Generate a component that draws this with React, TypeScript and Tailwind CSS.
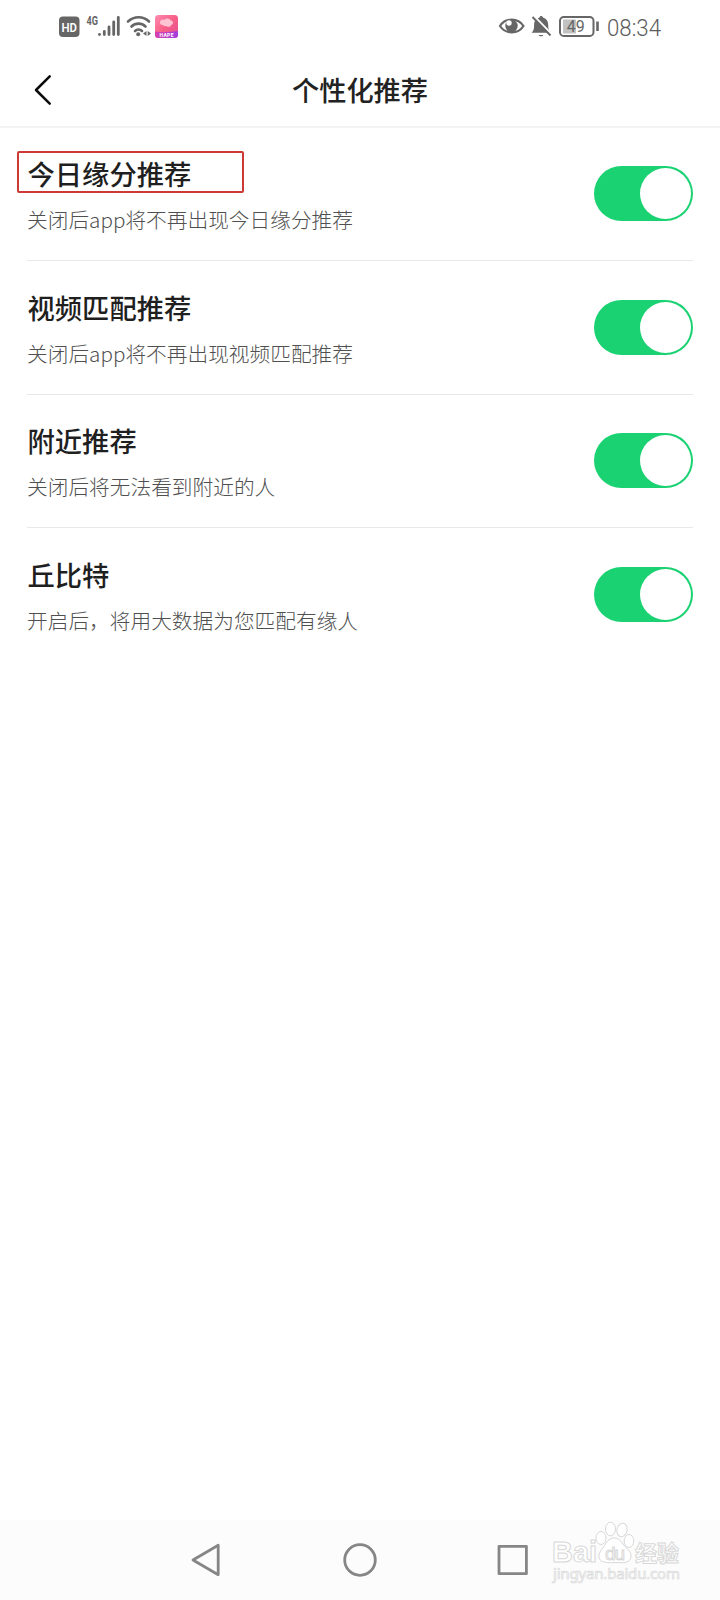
import { useState } from "react";

const rows = [
  { title: "今日缘分推荐", note: "关闭后app将不再出现今日缘分推荐", marked: true },
  { title: "视频匹配推荐", note: "关闭后app将不再出现视频匹配推荐" },
  { title: "附近推荐", note: "关闭后将无法看到附近的人" },
  { title: "丘比特", note: "开启后，将用大数据为您匹配有缘人" },
];

function StatusBar() {
  return (
    <div className="flex h-[52px] items-center justify-between pl-[58px] pr-[51px] text-[#666]">
      <svg width="122" height="32" viewBox="58 10 122 32" fill="none">
        <defs>
          <linearGradient id="pink" x1="0" y1="0" x2="1" y2="1">
            <stop offset="0" stopColor="#ff8bb0" />
            <stop offset="0.5" stopColor="#f85f86" />
            <stop offset="1" stopColor="#e24e98" />
          </linearGradient>
          <linearGradient id="band" x1="0" y1="0" x2="1" y2="0">
            <stop offset="0" stopColor="#d63fae" />
            <stop offset="1" stopColor="#a03fe0" />
          </linearGradient>
        </defs>
        <rect x="59" y="16.500" width="20.500" height="20.500" rx="4" fill="#666" />
        <text x="69.200" y="31.500" textAnchor="middle" fontSize="13.500" fontWeight="600" fill="#fff" fontFamily="Roboto" textLength="15.500" lengthAdjust="spacingAndGlyphs">HD</text>
        <text x="86.500" y="25.300" fontSize="12.500" fontWeight="700" fill="#666" fontFamily="Roboto" textLength="11.500" lengthAdjust="spacingAndGlyphs">4G</text>
        <g stroke="#666" strokeWidth="2.800" strokeLinecap="round">
          <path d="M99.500 34.300v0.300M104.300 31.500v3.100M109 27v7.600M113.700 22v12.600M118.300 17.300v17.300" />
        </g>
        <g stroke="#666" strokeWidth="2.600" strokeLinecap="round">
          <path d="M128 21.500c6-5.600 15.300-5.600 21 0M131.500 26.500c4-3.800 10-3.800 14 0M135 31c2-1.900 5-1.900 7 0" />
        </g>
        <circle cx="138.200" cy="34.300" r="2" fill="#666" />
        <path d="M143 33.500l3.500-2.500v5zM151 33.500l-3.300-2.500v5z" fill="#666" />
        <rect x="155" y="15" width="23" height="23" rx="3.500" fill="url(#pink)" />
        <path d="M155 31.500q11.500 1.500 23-0.500v3.500a3.500 3.500 0 0 1-3.500 3.500h-16a3.500 3.500 0 0 1-3.500-3.500z" fill="url(#band)" />
        <path d="M160 22.500c0-3 3-3.500 4.500-2.500c1.500-2.500 6-1.500 6 .5c3-.5 3.500 4 .5 4.500c0 2-3.500 2.500-4.500 1c-2 .5-3-.2-3.500-1c-2 .3-3-1-3-2.500z" fill="#ffc4d2" />
        <text x="166.500" y="36.800" textAnchor="middle" fontSize="5" fontWeight="700" fill="#fff" fontFamily="Roboto" textLength="14">HAPE</text>
      </svg>
      <svg width="172" height="32" viewBox="497 10 172 32" fill="none">
        <path d="M500 26c5.500-8.500 18-8.500 23.500 0c-5.500 8.500-18 8.500-23.500 0z" stroke="#666" strokeWidth="2.200" />
        <circle cx="511.500" cy="26" r="6.200" fill="#666" />
        <circle cx="509" cy="23" r="2.700" fill="#fff" />
        <path d="M531.500 32.800c2.300-2 2.600-4 2.600-8c0-4 2.500-6.500 5.400-7.300c.2-2 3.200-2 3.400 0c3.100.8 5.300 3.500 5.300 7.300c0 4 .5 6 2.600 8z" fill="#666" />
        <path d="M538.500 35h5c-.7 1.800-4.300 1.800-5 0z" fill="#666" />
        <path d="M534.500 16.500l17 17.500" stroke="#fff" strokeWidth="2" />
        <path d="M532.500 17l18 18.500" stroke="#666" strokeWidth="1.900" />
        <rect x="560" y="17" width="33.500" height="19" rx="3.800" stroke="#666" strokeWidth="2" />
        <rect x="563" y="19.500" width="13" height="14" fill="#c2c2c2" />
        <path d="M597.500 21.500v9.500" stroke="#666" strokeWidth="2.600" />
        <text x="575.800" y="32.200" textAnchor="middle" fontSize="16" fill="#666" fontFamily="Roboto" textLength="18">49</text>
        <text x="607" y="35.500" fontSize="24" fontWeight="300" fill="#5c5c5c" fontFamily="Roboto" textLength="54" lengthAdjust="spacingAndGlyphs">08:34</text>
      </svg>
    </div>
  );
}

function Toggle() {
  const [on, setOn] = useState(true);
  return (
    <button
      role="switch"
      aria-checked={on}
      onClick={() => setOn(!on)}
      className={`flex h-[55px] w-[99px] items-center rounded-full p-[2px] ${on ? "justify-end bg-[#1ad272]" : "justify-start bg-gray-300"}`}
    >
      <span className="size-[51px] rounded-full bg-white" />
    </button>
  );
}

function NavBar() {
  return (
    <nav className="flex h-20 items-center bg-[#fcfcfc] pl-[190px]">
      <svg width="340" height="36" viewBox="190 1542 340 36" fill="none" stroke="#868686" strokeWidth="2.800" strokeLinejoin="round">
        <path d="M193 1560l25.200-14.700v29.400z" />
        <circle cx="360" cy="1560" r="15.300" />
        <rect x="499" y="1546.300" width="27.400" height="27.400" />
      </svg>
      <svg className="ml-[20px]" width="140" height="80" viewBox="550 1520 140 80" fill="#fff" stroke="#d8d8d8" strokeWidth="1">
        <ellipse cx="601" cy="1538" rx="5" ry="6.500" />
        <ellipse cx="610.500" cy="1529" rx="5" ry="6.800" />
        <ellipse cx="622" cy="1530" rx="5" ry="6.800" transform="rotate(12 622 1530)" />
        <ellipse cx="629" cy="1541" rx="4.800" ry="6.500" />
        <path d="M606 1543c5-7 12-7 17 1c4 5 9 8 8 13c-1 6-7 6-15 5.500c-8 .5-15 .5-17-4.500c-1-6 4-9 7-15z" />
        <text x="552" y="1562" fontSize="29" fontWeight="700" fontFamily="Liberation Sans" textLength="45" lengthAdjust="spacingAndGlyphs">Bai</text>
        <text x="605" y="1560" fontSize="19" fontWeight="400" fontFamily="Liberation Sans" textLength="20">du</text>
        <text x="635" y="1561" fontSize="22" fontWeight="700" fontFamily="Noto Sans CJK SC">经验</text>
        <text x="553" y="1579" fontSize="15" strokeWidth="0.700" fontFamily="Noto Sans" textLength="127">jingyan.baidu.com</text>
      </svg>
    </nav>
  );
}

export default function App() {
  return (
    <div className="flex h-[1600px] w-[720px] flex-col bg-white font-['Noto_Sans_CJK_SC',sans-serif]">
      <StatusBar />
      <header className="grid h-[76px] grid-cols-[80px_1fr_80px] items-center border-b-2 border-[#f3f3f3]">
        <button aria-label="返回" className="pl-[34px] pt-px">
          <svg width="20" height="32" viewBox="0 0 20 32" fill="none" stroke="#0c0c0c" strokeWidth="2.500" strokeLinecap="round" strokeLinejoin="round">
            <path d="M15.700 2.300L2 16l13.700 13.700" />
          </svg>
        </button>
        <h1 className="text-center text-[27.2px] font-medium leading-10 text-[#222]">个性化推荐</h1>
      </header>
      <main className="flex-1 px-[27px]">
        {rows.map((row, i) => (
          <section
            key={row.title}
            className={`flex items-start justify-between ${i === 0 ? "h-[133px]" : "h-[133.5px]"} ${i < rows.length - 1 ? "border-b border-[#e8e8e8]" : ""}`}
          >
            <div className={i === 0 ? "pt-[23px]" : "pt-[23.5px]"}>
              <h2 className={`-ml-[10px] h-[42px] w-[227px] pl-[10.5px] pt-px text-[27.3px] font-medium leading-[42px] text-[#1f1f1f] ${row.marked ? "rounded-[2px] outline-2 -outline-offset-2 outline-[#cd3a34]" : ""}`}>
                {row.title}
              </h2>
              <p className="mt-[11px] text-[20.7px] font-light leading-[30px] text-[#505050]">{row.note}</p>
            </div>
            <div className={i === 0 ? "pt-[38px]" : "pt-[38.5px]"}>
              <Toggle />
            </div>
          </section>
        ))}
      </main>
      <NavBar />
    </div>
  );
}
